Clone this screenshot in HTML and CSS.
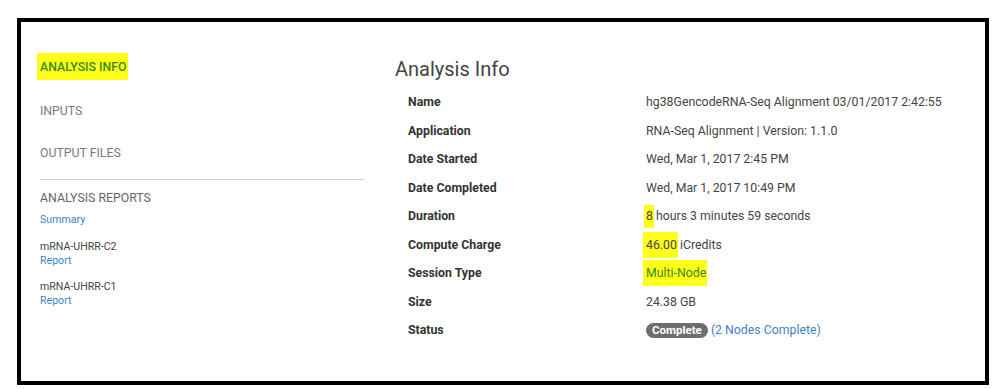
FILE: index.html
```html
<!DOCTYPE html>
<html>
<head>
<meta charset="utf-8">
<link rel="stylesheet" href="styles.css">
</head>
<body>
<div class="frame">
  <nav class="side">
    <div class="nav-item active"><span class="hl hl-nav">ANALYSIS INFO</span></div>
    <div class="nav-item">INPUTS</div>
    <div class="nav-item">OUTPUT FILES</div>
    <div class="divider"></div>
    <div class="reports-title">ANALYSIS REPORTS</div>
    <a class="link small summary">Summary</a>
    <div class="report">
      <div class="report-name">mRNA-UHRR-C2</div>
      <a class="link small">Report</a>
    </div>
    <div class="report">
      <div class="report-name">mRNA-UHRR-C1</div>
      <a class="link small">Report</a>
    </div>
  </nav>
  <main class="content">
    <h1 class="title">Analysis Info</h1>
    <div class="table">
      <div class="row"><div class="label">Name</div><div class="value">hg38GencodeRNA-Seq Alignment 03/01/2017 2:42:55</div></div>
      <div class="row"><div class="label">Application</div><div class="value">RNA-Seq Alignment | Version: 1.1.0</div></div>
      <div class="row"><div class="label">Date Started</div><div class="value">Wed, Mar 1, 2017 2:45 PM</div></div>
      <div class="row"><div class="label">Date Completed</div><div class="value">Wed, Mar 1, 2017 10:49 PM</div></div>
      <div class="row"><div class="label">Duration</div><div class="value"><span class="hl hl-8">8</span> hours 3 minutes 59 seconds</div></div>
      <div class="row"><div class="label">Compute Charge</div><div class="value"><span class="hl hl-46">46.00</span> iCredits</div></div>
      <div class="row"><div class="label">Session Type</div><div class="value"><span class="hl hl-mn">Multi-Node</span></div></div>
      <div class="row"><div class="label">Size</div><div class="value">24.38 GB</div></div>
      <div class="row"><div class="label">Status</div><div class="value"><span class="badge">Complete</span> <a class="link">(2 Nodes Complete)</a></div></div>
    </div>
  </main>
</div>
</body>
</html>
```
FILE: styles.css
```css
html, body {
  margin: 0;
  padding: 0;
  background: #fff;
}
body {
  font-family: Roboto, "Liberation Sans", Arial, sans-serif;
  color: #444;
}
.frame {
  box-sizing: border-box;
  margin: 18px 0 0 17px;
  width: 972px;
  height: 367px;
  border: 4px solid #000;
  display: flex;
}
.side {
  width: 325px;
  margin-left: 19px;
  padding-top: 22px;
  display: flex;
  flex-direction: column;
  align-items: flex-start;
}
.nav-item {
  font-size: 12.3px;
  color: #7a7a7a;
  height: 42px;
  line-height: 42px;
}
.nav-item.active {
  height: 46px;
  line-height: 46px;
}
.hl {
  background: #ffff1a;
}
.hl-nav {
  color: #3b8a1e;
  font-weight: 500;
  padding: 7px 1px 6px 3px;
  margin-left: -3px;
}
.divider {
  width: 325px;
  height: 1px;
  background: #d6d6d6;
  margin-top: 5px;
}
.reports-title {
  font-size: 12.3px;
  color: #666;
  line-height: 14px;
  margin-top: 11px;
}
.link {
  color: #3f82c8;
  text-decoration: none;
  font-size: 12.3px;
}
.link.small {
  font-size: 10.6px;
  line-height: 13px;
}
.summary {
  margin-top: 8px;
  margin-bottom: 1px;
}
.report {
  margin-top: 13px;
  display: flex;
  flex-direction: column;
}
.report-name {
  font-size: 10.6px;
  line-height: 13px;
  color: #444;
  margin-bottom: 1px;
}
.content {
  margin-left: 30px;
  padding-top: 35px;
}
.title {
  margin: 0 0 7px 0;
  font-size: 20px;
  line-height: 24px;
  font-weight: 400;
  color: #444;
}
.table {
  padding-left: 13px;
}
.row {
  display: flex;
  height: 28.5px;
  align-items: center;
  font-size: 12.3px;
}
.label {
  width: 238px;
  font-weight: 700;
  color: #333;
}
.value {
  color: #444;
}
.hl-8 {
  padding: 4px 1px 5px 2px;
  margin-left: -2px;
  margin-right: -1px;
}
.hl-46 {
  padding: 6px 1px 6px 3px;
  margin-left: -3px;
  margin-right: -1px;
}
.hl-mn {
  color: #3b8a1e;
  padding: 6px 1px 6px 3px;
  margin-left: -3px;
}
.badge {
  display: inline-block;
  background: #6e6e6e;
  color: #fff;
  font-weight: 700;
  font-size: 11.5px;
  line-height: 15px;
  padding: 0 6px;
  border-radius: 8px;
  vertical-align: middle;
}
```
